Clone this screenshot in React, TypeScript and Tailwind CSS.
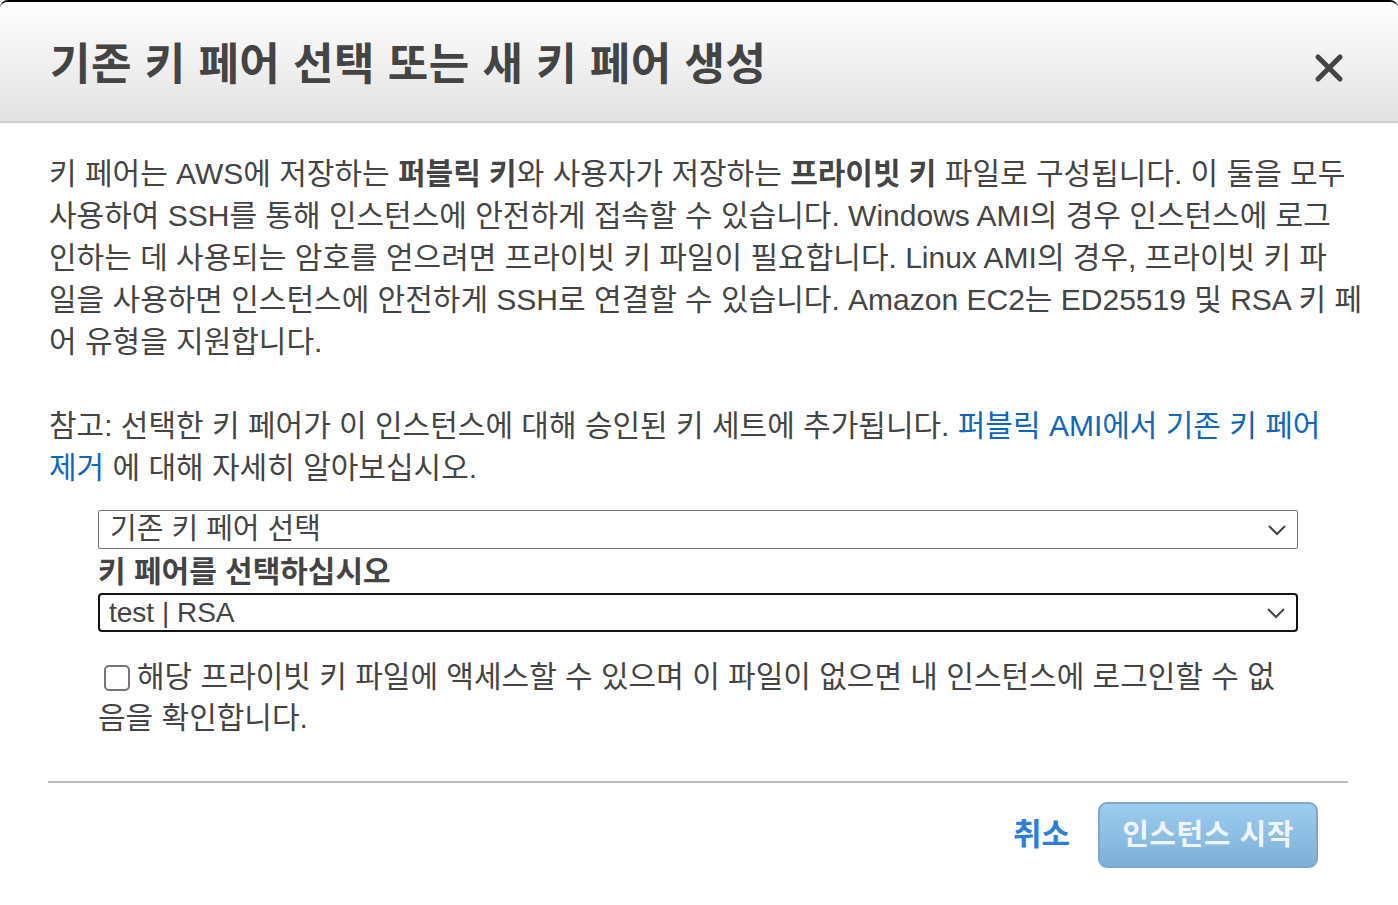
import React, { useState } from 'react';

const font = { fontFamily: '"Liberation Sans", Arial, "Noto Sans CJK KR", sans-serif' };

const Chevron: React.FC = () => (
  <svg width="20" height="12" viewBox="0 0 20 12" className="absolute right-[10px] top-1/2 -translate-y-1/2">
    <path d="M2 2 L10 10 L18 2" fill="none" stroke="#444" strokeWidth="2" />
  </svg>
);

const App: React.FC = () => {
  const [checked, setChecked] = useState(false);

  return (
    <div className="w-[1398px] h-[905px] bg-white overflow-hidden text-[#444]" style={font}>
      <div className="border-t-2 border-black rounded-t-[8px] h-full bg-white">
        {/* Header */}
        <div className="h-[121px] bg-gradient-to-b from-white to-[#e2e2e2] border-b-2 border-[#cfcfcf] flex items-center justify-between pl-[50px] pr-[54px] rounded-t-[8px]">
          <h1 className="text-[44px] font-bold text-[#444] tracking-[0.5px] leading-none pt-[6px] whitespace-nowrap">
            기존 키 페어 선택 또는 새 키 페어 생성
          </h1>
          <button className="mt-[12px]">
            <svg width="30" height="30" viewBox="0 0 30 30">
              <path d="M4 4 L26 26 M26 4 L4 26" stroke="#444" strokeWidth="5" strokeLinecap="round" />
            </svg>
          </button>
        </div>

        {/* Body */}
        <div className="pl-[49px] pr-[50px] pt-[30px] text-[30px] leading-[42px] whitespace-nowrap">
          <p>
            키 페어는 AWS에 저장하는 <b>퍼블릭 키</b>와 사용자가 저장하는 <b>프라이빗 키</b> 파일로 구성됩니다. 이 둘을 모두
            <br />
            사용하여 SSH를 통해 인스턴스에 안전하게 접속할 수 있습니다. Windows AMI의 경우 인스턴스에 로그
            <br />
            인하는 데 사용되는 암호를 얻으려면 프라이빗 키 파일이 필요합니다. Linux AMI의 경우, 프라이빗 키 파
            <br />
            일을 사용하면 인스턴스에 안전하게 SSH로 연결할 수 있습니다. Amazon EC2는 ED25519 및 RSA 키 페
            <br />
            어 유형을 지원합니다.
          </p>
          <p className="mt-[42px]">
            참고: 선택한 키 페어가 이 인스턴스에 대해 승인된 키 세트에 추가됩니다.{' '}
            <a className="text-[#1166bb]">
              퍼블릭 AMI에서 기존 키 페어
              <br />
              제거
            </a>{' '}
            에 대해 자세히 알아보십시오.
          </p>

          <div className="pl-[49px] pr-[50px] mt-[21px]">
            <div className="relative h-[39px] border border-[#777] rounded-[2px] flex items-center pl-[11px]">
              <span className="leading-none text-[29px]">기존 키 페어 선택</span>
              <Chevron />
            </div>
            <div className="font-bold leading-[42px] mt-[2px]">키 페어를 선택하십시오</div>
            <div className="relative h-[39px] border-2 border-[#111] rounded-[4px] flex items-center pl-[9px]">
              <span className="leading-none text-[28px]">test | RSA</span>
              <Chevron />
            </div>

            <div className="mt-[24px] leading-[41px] pr-[16px]">
              <label className="cursor-pointer">
                <span
                  onClick={() => setChecked(!checked)}
                  className="inline-block align-[-4px] ml-[6px] mr-[7px] w-[26px] h-[26px] border-2 border-[#767676] rounded-[5px] bg-white"
                >
                  {checked && (
                    <svg viewBox="0 0 24 24" className="w-full h-full">
                      <path d="M5 12 L10 17 L19 7" fill="none" stroke="#444" strokeWidth="3" />
                    </svg>
                  )}
                </span>
                해당 프라이빗 키 파일에 액세스할 수 있으며 이 파일이 없으면 내 인스턴스에 로그인할 수 없
                <br />
                음을 확인합니다.
              </label>
            </div>
          </div>

          <div className="mt-[43px] -ml-[1px] border-t-2 border-[#bbb]" />

          <div className="flex justify-end items-center pr-[30px] pt-[19px] gap-[28px]">
            <a className="text-[#2a7fd8] font-bold text-[31px]">취소</a>
            <button className="w-[220px] h-[66px] rounded-[9px] border-2 border-[#7aaad3] bg-gradient-to-b from-[#9ccdf0] to-[#7eafd6] text-[#eef4fa] font-bold text-[29px] tracking-[0.5px]">
              인스턴스 시작
            </button>
          </div>
        </div>
      </div>
    </div>
  );
};

export default App;
